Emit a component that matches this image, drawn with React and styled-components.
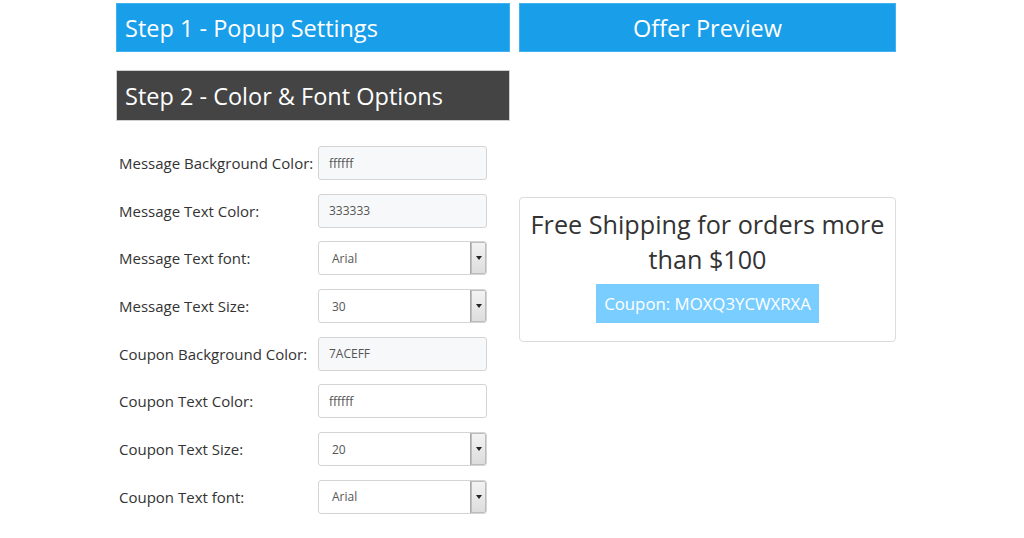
import React from "react";
import styled, { createGlobalStyle } from "styled-components";

const Global = createGlobalStyle`
  html, body { margin: 0; padding: 0; background: #fff; }
  body { font-family: "Open Sans", "Liberation Sans", sans-serif; color: #333; }
  * { box-sizing: border-box; }
`;

const Page = styled.div`
  display: flex;
  gap: 9px;
  padding: 3px 0 0 116px;
  width: 1024px;
  height: 538px;
`;

const LeftCol = styled.div`
  width: 394px;
  display: flex;
  flex-direction: column;
`;

const RightCol = styled.div`
  width: 377px;
  display: flex;
  flex-direction: column;
`;

const Header = styled.div`
  height: ${(p) => p.$h || 49}px;
  background: ${(p) => (p.$dark ? "#444444" : "#199ee9")};
  border: 1px solid ${(p) => (p.$dark ? "#d0d0d0" : "#43b1ef")};
  color: #fff;
  font-size: 23.5px;
  line-height: 1;
  display: flex;
  align-items: center;
  justify-content: ${(p) => (p.$center ? "center" : "flex-start")};
  padding-left: ${(p) => (p.$center ? 0 : 8)}px;
  padding-top: 2px;
  margin-top: ${(p) => p.$mt || 0}px;
`;

const Form = styled.div`
  display: flex;
  flex-direction: column;
  gap: 13.7px;
  margin-top: 25px;
  padding-left: 3px;
`;

const Row = styled.div`
  display: flex;
  align-items: center;
  height: 34px;
`;

const Label = styled.div`
  width: 199px;
  font-size: 15px;
  color: #333;
  white-space: nowrap;
`;

const Input = styled.div`
  width: 169px;
  height: 34px;
  border: 1px solid #d4d4d4;
  border-radius: 3px;
  background: ${(p) => (p.$gray ? "#f7f8fa" : "#fff")};
  font-size: 12px;
  color: #555;
  display: flex;
  align-items: center;
  padding-left: ${(p) => (p.$select ? 13 : 10)}px;
  position: relative;
  overflow: hidden;
`;

const DropBtn = styled.div`
  position: absolute;
  right: 0;
  top: 0;
  bottom: 0;
  width: 16px;
  border-left: 1px solid #a8a8a8;
  border-radius: 0 2px 2px 0;
  background: linear-gradient(#f4f4f4, #dcdcdc);
  box-shadow: inset 0 0 0 1px #bdbdbd;
  display: flex;
  align-items: center;
  justify-content: center;
  &::after {
    content: "";
    border-left: 3.5px solid transparent;
    border-right: 3.5px solid transparent;
    border-top: 4px solid #222;
  }
`;

const Preview = styled.div`
  margin-top: 145px;
  height: 145px;
  border: 1px solid #dcdcdc;
  border-radius: 4px;
  display: flex;
  flex-direction: column;
  align-items: center;
  padding-top: 9px;
`;

const Message = styled.div`
  font-size: 25.2px;
  line-height: 35px;
  color: #333;
  text-align: center;
  width: 100%;
`;

const Coupon = styled.div`
  margin-top: 7px;
  background: #7aceff;
  color: #fff;
  font-size: 16.8px;
  height: 39px;
  padding: 0 8px;
  display: flex;
  align-items: center;
`;

const fields = [
  { label: "Message Background Color:", value: "ffffff", gray: true },
  { label: "Message Text Color:", value: "333333", gray: true },
  { label: "Message Text font:", value: "Arial", select: true },
  { label: "Message Text Size:", value: "30", select: true },
  { label: "Coupon Background Color:", value: "7ACEFF", gray: true },
  { label: "Coupon Text Color:", value: "ffffff" },
  { label: "Coupon Text Size:", value: "20", select: true },
  { label: "Coupon Text font:", value: "Arial", select: true },
];

export default function App() {
  return (
    <>
      <Global />
      <Page>
        <LeftCol>
          <Header>Step 1 - Popup Settings</Header>
          <Header $dark $mt={18} $h={51}>Step 2 - Color &amp; Font Options</Header>
          <Form>
            {fields.map((f) => (
              <Row key={f.label}>
                <Label>{f.label}</Label>
                <Input $gray={f.gray} $select={f.select}>
                  {f.value}
                  {f.select && <DropBtn />}
                </Input>
              </Row>
            ))}
          </Form>
        </LeftCol>
        <RightCol>
          <Header $center>Offer Preview</Header>
          <Preview>
            <Message>
              Free Shipping for orders more
              <br />
              than $100
            </Message>
            <Coupon>Coupon: MOXQ3YCWXRXA</Coupon>
          </Preview>
        </RightCol>
      </Page>
    </>
  );
}
